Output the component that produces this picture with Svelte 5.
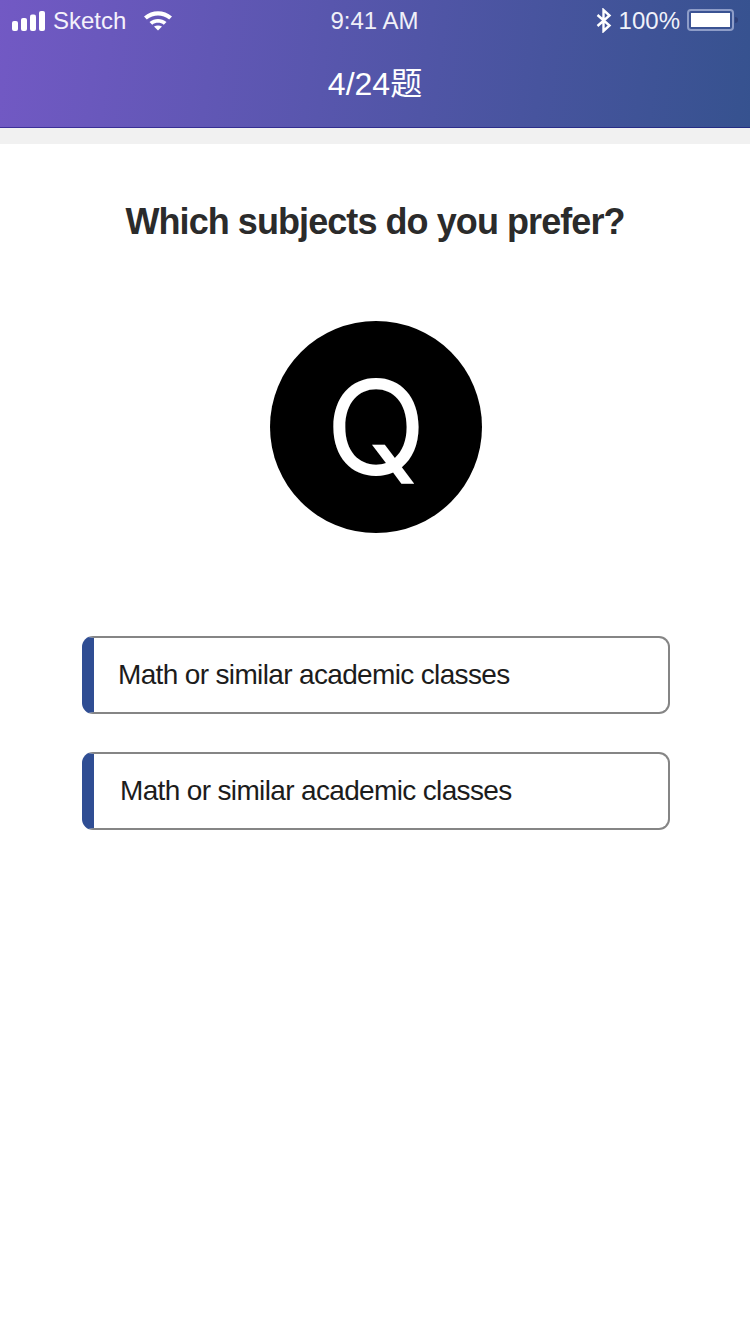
<script>
  let options = [
    { id: 1, label: "Math or similar academic classes", shifted: false },
    { id: 2, label: "Math or similar academic classes", shifted: true },
  ];
</script>

<main>
  <header>
    <div class="status">
      <div class="left">
        <svg class="signal" width="34" height="21" viewBox="0 0 34 21">
          <rect x="0" y="10" width="6" height="10" rx="2" />
          <rect x="9" y="7" width="6" height="13" rx="2" />
          <rect x="18" y="3.5" width="6" height="16.5" rx="2" />
          <rect x="27" y="0" width="6" height="20" rx="2" />
        </svg>
        <span class="carrier">Sketch</span>
        <svg class="wifi" width="30" height="22" viewBox="0 0 30 22">
          <path d="M1 7.5 C9 0.5 21 0.5 29 7.5 L26.2 10.5 C19.5 5 10.5 5 3.8 10.5 Z" />
          <path d="M6.5 13 C11.5 9 18.5 9 23.5 13 L20.8 15.8 C17.5 13.2 12.5 13.2 9.2 15.8 Z" />
          <path d="M11 17.6 C13.5 16 16.5 16 19 17.6 L15 21.6 Z" />
        </svg>
      </div>
      <span class="time">9:41 AM</span>
      <div class="right">
        <svg class="bt" width="16" height="25" viewBox="0 0 16 25">
          <path d="M1.5 7 L13.5 17.5 L7.5 23 L7.5 2 L13.5 7.5 L1.5 18" fill="none" stroke="#fff" stroke-width="2.4" />
        </svg>
        <span class="pct">100%</span>
        <div class="battery"><div class="fill"></div></div>
        <div class="nub"></div>
      </div>
    </div>
    <h1>4/24题</h1>
  </header>
  <div class="strip"></div>

  <section>
    <h2>Which subjects do you prefer?</h2>
    <div class="avatar">Q</div>
    <div class="options">
      {#each options as opt (opt.id)}
        <button class="option" class:shifted={opt.shifted}>{opt.label}</button>
      {/each}
    </div>
  </section>
</main>

<style>
  :global(body) {
    background: #fff;
  }
  main {
    width: 750px;
    height: 1334px;
    font-family: "Liberation Sans", Arial, sans-serif;
    overflow: hidden;
    background: #fff;
  }
  header {
    height: 128px;
    box-sizing: border-box;
    background: linear-gradient(97deg, #7259c4 0%, #36528f 100%);
    box-shadow: inset 0 -1px 0 rgba(20, 15, 120, 0.55);
    color: #fff;
    padding-top: 1px;
  }
  .status {
    height: 40px;
    display: grid;
    grid-template-columns: 1fr auto 1fr;
    align-items: center;
    padding: 0 12px;
    font-size: 24px;
  }
  .left,
  .right {
    display: flex;
    align-items: center;
  }
  .right {
    justify-content: flex-end;
  }
  .signal {
    fill: #fff;
  }
  .carrier {
    margin-left: 7px;
    color: #f4f1fb;
  }
  .wifi {
    fill: #fff;
    margin-left: 17px;
    margin-top: -3px;
  }
  .time {
    color: #f0f0f8;
    margin-left: -1px;
  }
  .bt {
    margin-right: 7px;
    margin-top: -1px;
  }
  .pct {
    color: #f0f2fa;
    margin-right: 7px;
  }
  .battery {
    width: 47px;
    height: 22px;
    box-sizing: border-box;
    border: 2px solid #8e9dc8;
    border-radius: 4px;
    padding: 2px;
    margin-top: -2px;
  }
  .fill {
    height: 100%;
    background: #fff;
  }
  .nub {
    width: 3px;
    height: 6px;
    margin-left: 1px;
    margin-top: -2px;
    background: #2f3f78;
    border-radius: 0 3px 3px 0;
  }
  h1 {
    margin: 0;
    text-align: center;
    font-weight: 400;
    font-size: 32px;
    line-height: 86px;
    height: 86px;
    font-family: "Liberation Sans", "Noto Sans CJK SC", sans-serif;
    color: #fff;
  }
  .strip {
    height: 16px;
    background: #f1f1f1;
  }
  section {
    display: flex;
    flex-direction: column;
    align-items: center;
  }
  h2 {
    margin: 58px 0 0;
    font-size: 36px;
    line-height: 40px;
    font-weight: 700;
    color: #2b2b2b;
    letter-spacing: -0.93px;
  }
  .avatar {
    margin-top: 79px;
    margin-left: 2px;
    width: 212px;
    height: 212px;
    border-radius: 50%;
    background: #000;
    color: #fff;
    display: flex;
    align-items: center;
    justify-content: center;
    font-family: Inter, "Liberation Sans", sans-serif;
    font-size: 132px;
    line-height: 1;
  }
  .options {
    margin-top: 103px;
    margin-left: 2px;
    display: flex;
    flex-direction: column;
    gap: 38px;
  }
  .option {
    width: 588px;
    height: 78px;
    box-sizing: border-box;
    border: 2px solid #858585;
    border-left: 12px solid #2f4d93;
    border-radius: 11px;
    background: #fff;
    text-align: left;
    padding: 0 0 0 24px;
    font-family: inherit;
    font-size: 28px;
    letter-spacing: -0.65px;
    color: #1c1c1c;
  }
  .shifted {
    padding-left: 26px;
  }
</style>
